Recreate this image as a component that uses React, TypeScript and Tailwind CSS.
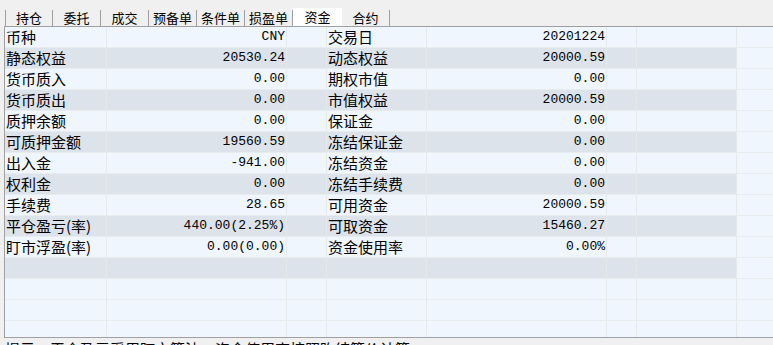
import React from 'react';

const tabs = ['持仓', '委托', '成交', '预备单', '条件单', '损盈单', '资金', '合约'];

type Row = [string, string, string, string];

const rows: Row[] = [
  ['币种', 'CNY', '交易日', '20201224'],
  ['静态权益', '20530.24', '动态权益', '20000.59'],
  ['货币质入', '0.00', '期权市值', '0.00'],
  ['货币质出', '0.00', '市值权益', '20000.59'],
  ['质押余额', '0.00', '保证金', '0.00'],
  ['可质押金额', '19560.59', '冻结保证金', '0.00'],
  ['出入金', '-941.00', '冻结资金', '0.00'],
  ['权利金', '0.00', '冻结手续费', '0.00'],
  ['手续费', '28.65', '可用资金', '20000.59'],
  ['平仓盈亏(率)', '440.00(2.25%)', '可取资金', '15460.27'],
  ['盯市浮盈(率)', '0.00(0.00)', '资金使用率', '0.00%'],
  ['', '', '', ''],
  ['', '', '', ''],
  ['', '', '', ''],
  ['', '', '', ''],
];

const cjk = { fontFamily: '"Noto Sans CJK SC", sans-serif' };
const mono = { fontFamily: '"Liberation Mono", "Noto Sans CJK SC", monospace' };

const App: React.FC = () => {
  return (
    <div className="w-[773px] h-[345px] bg-[#f0f0f0] overflow-hidden text-black" style={cjk}>
      {/* tab strip */}
      <div className="flex items-end h-[26px] pl-[5px]">
        {tabs.map((t, i) => {
          const active = t === '资金';
          return (
            <div
              key={t}
              className={`w-[48px] text-center text-[13px] border-r border-[#a0a0a0] ${i === 0 ? 'border-l' : ''} ${
                active ? 'bg-white h-[18px] leading-[18px] border-r-0 w-[49px]' : 'h-[16px] leading-[16px]'
              }`}
            >
              {t}
            </div>
          );
        })}
      </div>

      {/* fund grid */}
      <div className="ml-[4px] h-[312px] border-t border-l border-b border-[#a0a0a0] overflow-hidden">
        {rows.map((r, i) => {
          // only the filled rows and the first blank one alternate
          const grey = i % 2 === 1 && i < 12;
          const bg = grey ? 'bg-[#dde3ea]' : 'bg-[#f0f6fd]';
          return (
            <div key={i} className="flex h-[21px] border-b border-[#e9ecef] bg-[#f0f6fd] text-[15px] leading-[20px]">
              <div className={`w-[102px] pl-[1px] border-r border-[#e6e9ec] whitespace-nowrap ${bg}`}>{r[0]}</div>
              <div className={`w-[180px] pr-[1px] text-right text-[13px] border-r border-[#e6e9ec] whitespace-nowrap ${bg}`} style={mono}>
                {r[1]}
              </div>
              <div className={`w-[40px] border-r border-[#e6e9ec] ${bg}`} />
              <div className={`w-[100px] pl-[1px] border-r border-[#e6e9ec] whitespace-nowrap ${bg}`}>{r[2]}</div>
              <div className={`w-[180px] pr-[1px] text-right text-[13px] border-r border-[#e6e9ec] whitespace-nowrap ${bg}`} style={mono}>
                {r[3]}
              </div>
              <div className={`w-[30px] border-r border-[#e6e9ec] ${bg}`} />
              <div className={`w-[100px] border-r border-[#e6e9ec] ${bg}`} />
              <div className="flex-1" />
            </div>
          );
        })}
      </div>

      <div className="pl-[5px] pt-[1px] text-[15px] leading-[20px] whitespace-nowrap">
        提示：平仓盈亏采用盯市算法，资金使用率按照昨结算价计算。
      </div>
    </div>
  );
};

export default App;
